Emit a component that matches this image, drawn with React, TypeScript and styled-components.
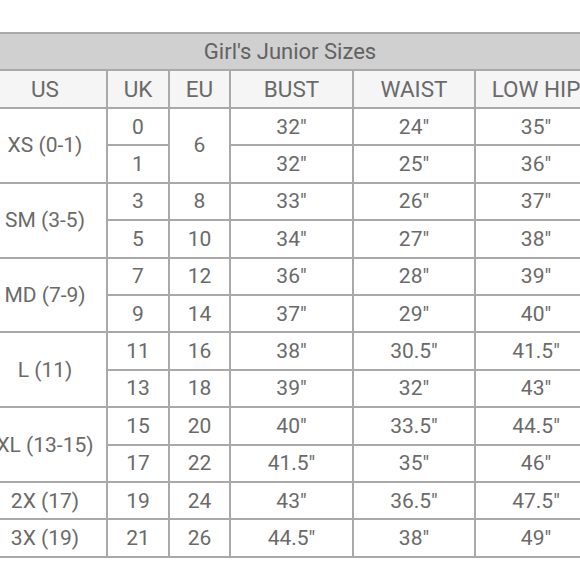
import React from "react";
import styled, { createGlobalStyle } from "styled-components";

const Global = createGlobalStyle`
  html, body { margin: 0; padding: 0; background: #ffffff; }
  body { width: 580px; height: 580px; overflow: hidden; font-family: Roboto, "Noto Sans", Arial, sans-serif; }
`;

const Page = styled.div`
  width: 580px;
  height: 580px;
  overflow: hidden;
  padding-top: 32px;
  box-sizing: border-box;
`;

const Table = styled.table`
  margin-left: -18px;
  width: 614px;
  border-collapse: collapse;
  table-layout: fixed;
  color: #6a6a6a;
  font-size: 21px;
`;

const TitleCell = styled.th`
  background: #d0d0d0;
  border: 2px solid #a9a9a9;
  height: 35px;
  padding: 0;
  font-weight: 400;
  font-size: 22px;
  color: #626262;
  text-align: center;
`;

const HeadCell = styled.th`
  background: #f5f5f5;
  border: 2px solid #a9a9a9;
  height: 36px;
  padding: 0;
  font-weight: 400;
  font-size: 22.5px;
  text-align: center;
  white-space: nowrap;
`;

const Cell = styled.td`
  border: 2px solid #a9a9a9;
  height: 35.4px;
  padding: 0;
  text-align: center;
  background: #ffffff;
  white-space: nowrap;
`;

type Row = { us?: string; span?: number; uk: string; eu?: string; euSpan?: number; bust: string; waist: string; hip: string };

const rows: Row[] = [
  { us: "XS (0-1)", span: 2, uk: "0", eu: "6", euSpan: 2, bust: "32\"", waist: "24\"", hip: "35\"" },
  { uk: "1", bust: "32\"", waist: "25\"", hip: "36\"" },
  { us: "SM (3-5)", span: 2, uk: "3", eu: "8", bust: "33\"", waist: "26\"", hip: "37\"" },
  { uk: "5", eu: "10", bust: "34\"", waist: "27\"", hip: "38\"" },
  { us: "MD (7-9)", span: 2, uk: "7", eu: "12", bust: "36\"", waist: "28\"", hip: "39\"" },
  { uk: "9", eu: "14", bust: "37\"", waist: "29\"", hip: "40\"" },
  { us: "L (11)", span: 2, uk: "11", eu: "16", bust: "38\"", waist: "30.5\"", hip: "41.5\"" },
  { uk: "13", eu: "18", bust: "39\"", waist: "32\"", hip: "43\"" },
  { us: "XL (13-15)", span: 2, uk: "15", eu: "20", bust: "40\"", waist: "33.5\"", hip: "44.5\"" },
  { uk: "17", eu: "22", bust: "41.5\"", waist: "35\"", hip: "46\"" },
  { us: "2X (17)", span: 1, uk: "19", eu: "24", bust: "43\"", waist: "36.5\"", hip: "47.5\"" },
  { us: "3X (19)", span: 1, uk: "21", eu: "26", bust: "44.5\"", waist: "38\"", hip: "49\"" },
];

export default function App() {
  return (
    <Page>
      <Global />
      <Table>
        <colgroup>
          <col style={{ width: 124 }} />
          <col style={{ width: 62 }} />
          <col style={{ width: 61 }} />
          <col style={{ width: 123 }} />
          <col style={{ width: 122 }} />
          <col style={{ width: 122 }} />
        </colgroup>
        <thead>
          <tr>
            <TitleCell colSpan={6}>Girl's Junior Sizes</TitleCell>
          </tr>
          <tr>
            <HeadCell>US</HeadCell>
            <HeadCell>UK</HeadCell>
            <HeadCell>EU</HeadCell>
            <HeadCell>BUST</HeadCell>
            <HeadCell>WAIST</HeadCell>
            <HeadCell>LOW HIP</HeadCell>
          </tr>
        </thead>
        <tbody>
          {rows.map((r, i) => (
            <tr key={i}>
              {r.us && <Cell rowSpan={r.span}>{r.us}</Cell>}
              <Cell>{r.uk}</Cell>
              {r.eu && <Cell rowSpan={r.euSpan ?? 1}>{r.eu}</Cell>}
              <Cell>{r.bust}</Cell>
              <Cell>{r.waist}</Cell>
              <Cell>{r.hip}</Cell>
            </tr>
          ))}
        </tbody>
      </Table>
    </Page>
  );
}
